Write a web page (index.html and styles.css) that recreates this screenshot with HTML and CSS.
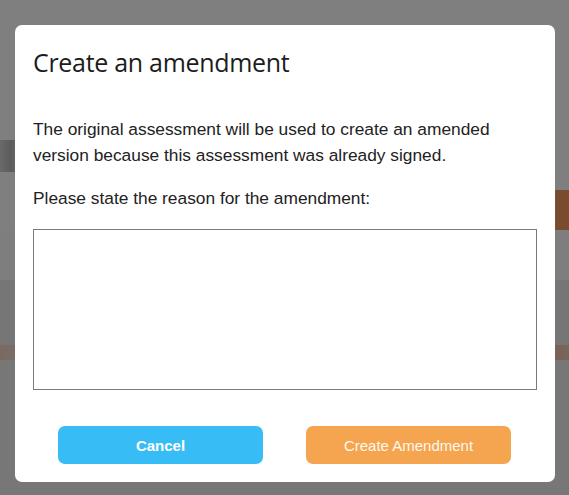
FILE: index.html
```html
<!DOCTYPE html>
<html lang="en">
<head>
<meta charset="utf-8">
<title>Create an amendment</title>
<link rel="stylesheet" href="styles.css">
</head>
<body>
<div class="backdrop">
  <div class="bg-row bg-top"></div>
  <div class="bg-row bg-dark"></div>
  <div class="bg-row bg-gap"></div>
  <div class="bg-row bg-brown"></div>
  <div class="bg-row bg-gap2"></div>
  <div class="bg-row bg-mid"></div>
  <div class="bg-row bg-orange"></div>
  <div class="bg-row bg-low"></div>
</div>
<div class="modal" role="dialog" aria-labelledby="modal-title">
  <h1 class="modal-title" id="modal-title">Create an amendment</h1>
  <div class="modal-body">
    <p class="intro">The original assessment will be used to create an amended version because this assessment was already signed.</p>
    <label class="reason-label" for="reason">Please state the reason for the amendment:</label>
    <textarea class="reason" id="reason"></textarea>
  </div>
  <div class="actions">
    <button class="btn btn-cancel" type="button">Cancel</button>
    <button class="btn btn-create" type="button">Create Amendment</button>
  </div>
</div>
</body>
</html>
```

FILE: styles.css
```css
* { box-sizing: border-box; }

html, body {
  margin: 0;
  padding: 0;
  width: 569px;
  height: 495px;
  overflow: hidden;
}

body {
  background: #7e7e7e;
  font-family: "Liberation Sans", Arial, sans-serif;
  position: relative;
}

.backdrop {
  display: flex;
  flex-direction: column;
  height: 495px;
}

.bg-row { width: 100%; }
.bg-top { height: 140px; background: #7f7f7f; }
.bg-dark { height: 32px; background: linear-gradient(90deg, #6a6a6a 0, #5c5c5c 10px, #646464 15px, #7f7f7f 30px); }
.bg-gap { height: 18px; background: #7f7f7f; }
.bg-brown { height: 40px; background: linear-gradient(90deg, #7f7f7f 0, #7f7f7f 552px, #7a4a2e 556px, #7b4c30 569px); }
.bg-gap2 { height: 50px; background: #7e7e7e; }
.bg-mid { height: 65px; background: #767676; }
.bg-orange { height: 15px; background: linear-gradient(90deg, #7a6a60 0, #786e68 15px, #767676 20px, #767676 550px, #7a6258 556px, #78665c 569px); }
.bg-low { flex: 1; background: #777777; }

.modal {
  position: absolute;
  left: 15px;
  top: 25px;
  width: 540px;
  height: 457px;
  background: #fff;
  border-radius: 7px;
  padding: 0 18px 18px;
  display: flex;
  flex-direction: column;
}

.modal-title {
  margin: 0;
  padding-top: 20px;
  font-family: "Open Sans", "Noto Sans", sans-serif;
  font-weight: 400;
  font-size: 25px;
  line-height: 35px;
  color: #1c1c1c;
  letter-spacing: -0.3px;
}

.modal-body {
  display: flex;
  flex-direction: column;
  padding-top: 36px;
}

.intro {
  margin: 0;
  font-size: 17.33px;
  line-height: 26px;
  color: #222;
}

.reason-label {
  margin-top: 17px;
  font-size: 17.33px;
  line-height: 26px;
  color: #222;
}

.reason {
  margin-top: 18px;
  width: 504px;
  height: 161px;
  border: 1px solid #7a7a7a;
  border-radius: 0;
  resize: none;
  padding: 4px;
  font: 16px "Liberation Sans", Arial, sans-serif;
}

.actions {
  margin-top: auto;
  display: flex;
  justify-content: space-between;
  padding: 0 26px 0 25px;
}

.btn {
  width: 205px;
  height: 38px;
  border: 0;
  border-radius: 7px;
  color: #fff;
  font-family: "Liberation Sans", Arial, sans-serif;
  font-size: 15px;
  cursor: pointer;
}

.btn-cancel {
  background: #37bcf6;
  font-weight: 700;
}

.btn-create {
  background: #f5a54f;
  font-weight: 400;
  color: #fff8ee;
}
```
